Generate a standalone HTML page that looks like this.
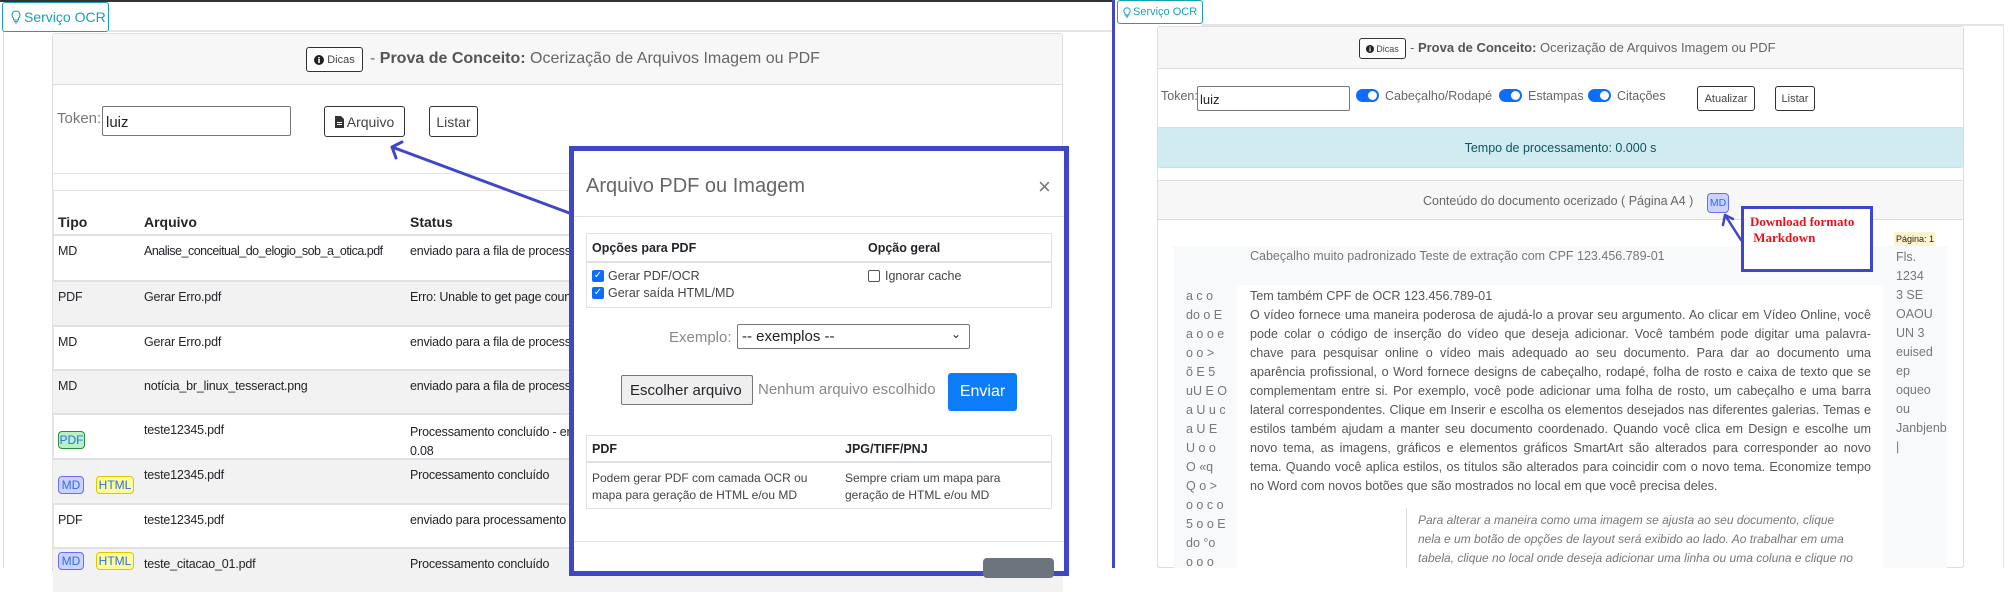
<!DOCTYPE html>
<html><head><meta charset="utf-8"><style>
*{box-sizing:border-box;margin:0;padding:0}
body{width:2010px;height:568px;overflow:hidden;background:#fff;font-family:"Liberation Sans",sans-serif;color:#212529;position:relative}
.a{position:absolute;white-space:nowrap}
.btn{position:absolute;border:1px solid #333;border-radius:3px;background:#fff;display:flex;align-items:center;justify-content:center;color:#444}
.row{position:absolute;left:53px;width:1010px;height:45px;border-top:2px solid #dee2e6;font-size:12.5px;letter-spacing:-0.2px}
.row span{position:absolute;top:8px}
.g{background:#f2f2f2}
.badge{position:absolute;border-radius:4px;font-size:12px;display:flex;align-items:center;justify-content:center;color:#2a6cf0;letter-spacing:0}
.pl{position:absolute;left:1250px;width:621px;font-size:12.6px;color:#555;text-align:justify;text-align-last:justify;white-space:nowrap;height:19px;line-height:19px}
.lc{position:absolute;left:1186px;font-size:12.5px;color:#777;line-height:19px}
.rc{position:absolute;left:1896px;font-size:12.5px;color:#777;line-height:19px}
</style></head><body>

<div class="a" style="left:0;top:0;width:1113px;height:2px;background:#333"></div>
<div class="a" style="left:3px;top:30px;width:1px;height:538px;background:#ddd"></div>
<div class="a" style="left:109px;top:30px;width:1004px;height:2px;background:#e4e4e4"></div>
<div class="a" style="left:2px;top:2px;width:107px;height:30px;border:1px solid #17a2b8;border-radius:3px;color:#17a2b8;font-size:14px;display:flex;align-items:center;padding-left:8px">
<svg width="10" height="14" viewBox="0 0 10 14" style="margin-right:3px"><path d="M5 1a4 4 0 0 0-2.5 7.1V10h5V8.1A4 4 0 0 0 5 1zM3 11.5h4M3.8 13h2.4" fill="none" stroke="#17a2b8" stroke-width="1"/></svg>Serviço OCR</div>

<div class="a" style="left:52px;top:33px;width:1011px;height:540px;border:1px solid #ddd;border-radius:3px"></div>
<div class="a" style="left:53px;top:34px;width:1009px;height:51px;background:#f7f7f7;border-bottom:1px solid #ddd"></div>
<div class="btn" style="left:306px;top:47px;width:57px;height:25px;font-size:11px"><svg width="10" height="10" style="margin-right:3px"><circle cx="5" cy="5" r="5" fill="#222"/><rect x="4.2" y="4" width="1.6" height="4" fill="#fff"/><rect x="4.2" y="2" width="1.6" height="1.4" fill="#fff"/></svg>Dicas</div>
<div class="a" style="left:370px;top:50px;font-size:16px;color:#666">- <b style="color:#555">Prova de Conceito:</b> Ocerização de Arquivos Imagem ou PDF</div>

<div class="a" style="left:57px;top:110px;font-size:15px;color:#777">Token:</div>
<div class="a" style="left:102px;top:106px;width:189px;height:30px;border:1px solid #777;border-radius:2px;font-size:15px;padding:7px 3px">luiz</div>
<div class="btn" style="left:324px;top:106px;width:81px;height:31px;font-size:14px"><svg width="9" height="12" style="margin-right:3px"><path d="M0 0h6l3 3v9H0z" fill="#333"/><rect x="2" y="6" width="5" height="1" fill="#fff"/><rect x="2" y="8" width="5" height="1" fill="#fff"/></svg>Arquivo</div>
<div class="btn" style="left:429px;top:106px;width:49px;height:31px;font-size:14px">Listar</div>
<div class="a" style="left:53px;top:173px;width:1009px;height:1px;background:#e4e4e4"></div>
<div class="a" style="left:52px;top:190px;width:1011px;height:1px;background:#e4e4e4"></div>
<div class="a" style="left:52px;top:190px;width:2px;height:378px;background:#e4e4e4"></div>

<div class="a" style="left:58px;top:214px;font-size:14px;font-weight:bold">Tipo</div>
<div class="a" style="left:144px;top:214px;font-size:14px;font-weight:bold">Arquivo</div>
<div class="a" style="left:410px;top:214px;font-size:14px;font-weight:bold">Status</div>

<div class="row" style="top:234px"><span style="left:5px">MD</span><span style="left:91px;letter-spacing:-0.5px">Analise_conceitual_do_elogio_sob_a_otica.pdf</span><span style="left:357px">enviado para a fila de processamento</span></div>
<div class="row g" style="top:280px"><span style="left:5px">PDF</span><span style="left:91px">Gerar Erro.pdf</span><span style="left:357px">Erro: Unable to get page count</span></div>
<div class="row" style="top:325px"><span style="left:5px">MD</span><span style="left:91px">Gerar Erro.pdf</span><span style="left:357px">enviado para a fila de processamento</span></div>
<div class="row g" style="top:369px"><span style="left:5px">MD</span><span style="left:91px">notícia_br_linux_tesseract.png</span><span style="left:357px">enviado para a fila de processamento</span></div>
<div class="row" style="top:413px"><span style="left:91px">teste12345.pdf</span><span style="left:357px;line-height:19px">Processamento concluído - em<br>0.08</span></div>
<div class="row g" style="top:458px"><span style="left:91px">teste12345.pdf</span><span style="left:357px">Processamento concluído</span></div>
<div class="row" style="top:503px"><span style="left:5px">PDF</span><span style="left:91px">teste12345.pdf</span><span style="left:357px">enviado para processamento</span></div>
<div class="row g" style="top:547px"><span style="left:91px">teste_citacao_01.pdf</span><span style="left:357px">Processamento concluído</span></div>

<div class="badge" style="left:58px;top:431px;width:27px;height:18px;background:#b9f0c6;border:1px solid #2a8a3a">PDF</div>
<div class="badge" style="left:58px;top:476px;width:26px;height:18px;background:#ccd2ff;border:1px solid #6b6bff">MD</div>
<div class="badge" style="left:96px;top:476px;width:38px;height:18px;background:#ffff9a;border:1px solid #e3c400">HTML</div>
<div class="badge" style="left:58px;top:552px;width:26px;height:18px;background:#ccd2ff;border:1px solid #6b6bff">MD</div>
<div class="badge" style="left:96px;top:552px;width:38px;height:18px;background:#ffff9a;border:1px solid #e3c400">HTML</div>

<svg class="a" style="left:0;top:0" width="1113" height="568"><path d="M572 214 L392 147 M392 147 L402 142 M392 147 L396 158" stroke="#3f46c8" stroke-width="3" fill="none" stroke-linecap="round"/></svg>

<div class="a" style="left:569px;top:146px;width:500px;height:430px;border:5px solid #3f46c8;background:#fff"></div>
<div class="a" style="left:586px;top:175px;font-size:20px;color:#666">Arquivo PDF ou Imagem</div>
<div class="a" style="left:1038px;top:174px;font-size:22px;color:#777">×</div>
<div class="a" style="left:574px;top:216px;width:490px;height:1px;background:#e2e2e2"></div>
<div class="a" style="left:586px;top:233px;width:466px;height:75px;border:1px solid #dee2e6"></div>
<div class="a" style="left:587px;top:261px;width:464px;height:2px;background:#dee2e6"></div>
<div class="a" style="left:592px;top:241px;font-size:12.5px;font-weight:bold">Opções para PDF</div>
<div class="a" style="left:868px;top:241px;font-size:12.5px;font-weight:bold">Opção geral</div>
<div class="a" style="left:592px;top:270px;width:12px;height:12px;background:#0d6efd;border-radius:2px;color:#fff;font-size:10px;line-height:12px;text-align:center">✓</div>
<div class="a" style="left:592px;top:287px;width:12px;height:12px;background:#0d6efd;border-radius:2px;color:#fff;font-size:10px;line-height:12px;text-align:center">✓</div>
<div class="a" style="left:608px;top:269px;font-size:12.5px;color:#444">Gerar PDF/OCR</div>
<div class="a" style="left:608px;top:286px;font-size:12.5px;color:#444">Gerar saída HTML/MD</div>
<div class="a" style="left:868px;top:270px;width:12px;height:12px;border:1px solid #555;border-radius:2px"></div>
<div class="a" style="left:885px;top:269px;font-size:12.5px;color:#444">Ignorar cache</div>
<div class="a" style="left:669px;top:329px;font-size:15px;color:#888">Exemplo:</div>
<div class="a" style="left:737px;top:324px;width:233px;height:25px;border:1px solid #777;border-radius:2px;font-size:15px;padding:3px 4px;color:#222">-- exemplos --<span style="position:absolute;right:8px;top:2px;font-size:12px">⌄</span></div>
<div class="a" style="left:621px;top:375px;width:132px;height:30px;border:1px solid #777;border-radius:2px;background:#efefef;font-size:15px;padding:6px 8px">Escolher arquivo</div>
<div class="a" style="left:758px;top:381px;font-size:15px;color:#888">Nenhum arquivo escolhido</div>
<div class="a" style="left:948px;top:373px;width:69px;height:38px;background:#0d7cf8;border-radius:3px;color:#fff;font-size:16px;display:flex;align-items:center;justify-content:center">Enviar</div>
<div class="a" style="left:586px;top:435px;width:466px;height:74px;border:1px solid #dee2e6"></div>
<div class="a" style="left:587px;top:461px;width:464px;height:2px;background:#dee2e6"></div>
<div class="a" style="left:592px;top:442px;font-size:12.5px;font-weight:bold">PDF</div>
<div class="a" style="left:845px;top:442px;font-size:12.5px;font-weight:bold">JPG/TIFF/PNJ</div>
<div class="a" style="left:592px;top:470px;font-size:12px;color:#444;line-height:17px">Podem gerar PDF com camada OCR ou<br>mapa para geração de HTML e/ou MD</div>
<div class="a" style="left:845px;top:470px;font-size:12px;color:#444;line-height:17px">Sempre criam um mapa para<br>geração de HTML e/ou MD</div>
<div class="a" style="left:574px;top:541px;width:490px;height:1px;background:#e2e2e2"></div>
<div class="a" style="left:983px;top:558px;width:71px;height:20px;background:#6c757d;border-radius:4px"></div>

<div class="a" style="left:1112px;top:0;width:3px;height:568px;background:#3f46c8"></div>

<div class="a" style="left:1202px;top:24px;width:801px;height:2px;background:#e4e4e4"></div>
<div class="a" style="left:2003px;top:24px;width:1px;height:544px;background:#e4e4e4"></div>
<div class="a" style="left:1117px;top:0;width:86px;height:24px;border:1px solid #17a2b8;border-radius:3px;color:#17a2b8;font-size:11px;display:flex;align-items:center;padding-left:5px">
<svg width="8" height="11" viewBox="0 0 10 14" style="margin-right:2px"><path d="M5 1a4 4 0 0 0-2.5 7.1V10h5V8.1A4 4 0 0 0 5 1zM3 11.5h4M3.8 13h2.4" fill="none" stroke="#17a2b8" stroke-width="1.2"/></svg>Serviço OCR</div>

<div class="a" style="left:1157px;top:26px;width:807px;height:542px;border:1px solid #ddd;border-radius:3px"></div>
<div class="a" style="left:1158px;top:27px;width:805px;height:42px;background:#f7f7f7;border-bottom:1px solid #ddd"></div>
<div class="btn" style="left:1359px;top:38px;width:47px;height:21px;font-size:9px"><svg width="8" height="8" style="margin-right:2px"><circle cx="4" cy="4" r="4" fill="#222"/><rect x="3.4" y="3.2" width="1.2" height="3.2" fill="#fff"/><rect x="3.4" y="1.5" width="1.2" height="1.1" fill="#fff"/></svg>Dicas</div>
<div class="a" style="left:1410px;top:40px;font-size:13px;color:#666">- <b style="color:#555">Prova de Conceito:</b> Ocerização de Arquivos Imagem ou PDF</div>

<div class="a" style="left:1161px;top:89px;font-size:12.5px;color:#666">Token:</div>
<div class="a" style="left:1197px;top:86px;width:153px;height:25px;border:1px solid #777;border-radius:2px;font-size:13px;padding:5px 2px">luiz</div>
<div class="a" style="left:1356px;top:89px;width:23px;height:13px;border-radius:7px;background:#0d6efd"><div style="position:absolute;right:2px;top:2px;width:9px;height:9px;border-radius:50%;background:#fff"></div></div>
<div class="a" style="left:1385px;top:89px;font-size:12.5px;color:#666">Cabeçalho/Rodapé</div>
<div class="a" style="left:1499px;top:89px;width:23px;height:13px;border-radius:7px;background:#0d6efd"><div style="position:absolute;right:2px;top:2px;width:9px;height:9px;border-radius:50%;background:#fff"></div></div>
<div class="a" style="left:1528px;top:89px;font-size:12.5px;color:#666">Estampas</div>
<div class="a" style="left:1588px;top:89px;width:23px;height:13px;border-radius:7px;background:#0d6efd"><div style="position:absolute;right:2px;top:2px;width:9px;height:9px;border-radius:50%;background:#fff"></div></div>
<div class="a" style="left:1617px;top:89px;font-size:12.5px;color:#666">Citações</div>
<div class="btn" style="left:1697px;top:86px;width:58px;height:25px;font-size:11px">Atualizar</div>
<div class="btn" style="left:1775px;top:86px;width:40px;height:25px;font-size:11px">Listar</div>

<div class="a" style="left:1157px;top:127px;width:807px;height:41px;background:#d1ecf1;border:1px solid #bee5eb;border-radius:3px;color:#0c5460;font-size:12.5px;text-align:center;line-height:40px">Tempo de processamento: 0.000 s</div>

<div class="a" style="left:1157px;top:180px;width:807px;height:388px;border:1px solid #ddd;border-radius:3px"></div>
<div class="a" style="left:1158px;top:181px;width:805px;height:39px;background:#f7f7f7;border-bottom:1px solid #ddd"></div>
<div class="a" style="left:1423px;top:194px;font-size:12.5px;color:#666">Conteúdo do documento ocerizado ( Página A4 )</div>
<div class="badge" style="left:1707px;top:193px;width:22px;height:20px;background:#ccd2ff;border:1px solid #6b6bff;font-size:10.5px">MD</div>

<div class="a" style="left:1174px;top:246px;width:773px;height:322px;background:#f8f9fa"></div>
<div class="a" style="left:1237px;top:285px;width:646px;height:283px;background:#fff"></div>
<div class="a" style="left:1250px;top:249px;font-size:12.5px;color:#777">Cabeçalho muito padronizado Teste de extração com CPF 123.456.789-01</div>
<div class="a" style="left:1894px;top:232px;width:41px;height:14px;background:#fff3cd;font-size:9px;line-height:14px;padding-left:2px;color:#222">Página: 1</div>

<div class="a" style="left:1250px;top:287px;font-size:12.6px;color:#555;line-height:19px">Tem também CPF de OCR 123.456.789-01</div>
<div class="pl" style="top:306px">O vídeo fornece uma maneira poderosa de ajudá-lo a provar seu argumento. Ao clicar em Vídeo Online, você</div>
<div class="pl" style="top:325px">pode colar o código de inserção do vídeo que deseja adicionar. Você também pode digitar uma palavra-</div>
<div class="pl" style="top:344px">chave para pesquisar online o vídeo mais adequado ao seu documento. Para dar ao documento uma</div>
<div class="pl" style="top:363px">aparência profissional, o Word fornece designs de cabeçalho, rodapé, folha de rosto e caixa de texto que se</div>
<div class="pl" style="top:382px">complementam entre si. Por exemplo, você pode adicionar uma folha de rosto, um cabeçalho e uma barra</div>
<div class="pl" style="top:401px">lateral correspondentes. Clique em Inserir e escolha os elementos desejados nas diferentes galerias. Temas e</div>
<div class="pl" style="top:420px">estilos também ajudam a manter seu documento coordenado. Quando você clica em Design e escolhe um</div>
<div class="pl" style="top:439px">novo tema, as imagens, gráficos e elementos gráficos SmartArt são alterados para corresponder ao novo</div>
<div class="pl" style="top:458px">tema. Quando você aplica estilos, os títulos são alterados para coincidir com o novo tema. Economize tempo</div>
<div class="pl" style="top:477px;text-align-last:left">no Word com novos botões que são mostrados no local em que você precisa deles.</div>

<div class="a" style="left:1406px;top:508px;width:1px;height:60px;background:#ddd"></div>
<div class="a" style="left:1418px;top:511px;font-size:12px;color:#777;font-style:italic;line-height:19px">Para alterar a maneira como uma imagem se ajusta ao seu documento, clique<br>nela e um botão de opções de layout será exibido ao lado. Ao trabalhar em uma<br>tabela, clique no local onde deseja adicionar uma linha ou uma coluna e clique no</div>

<div class="lc" style="top:287px">a c o<br>do o E<br>a o o e<br>o o &gt;<br>õ E 5<br>uU E O<br>a U u c<br>a U E<br>U o o<br>O «q<br>Q o &gt;<br>o o c o<br>5 o o E<br>do °o<br>o o o</div>
<div class="rc" style="top:248px">Fls.<br>1234<br>3 SE<br>OAOU<br>UN 3<br>euised<br>ep<br>oqueo<br>ou<br>Janbjenb<br>|</div>

<div class="a" style="left:1741px;top:206px;width:132px;height:66px;border:3px solid #3f46c8;background:#fff;color:#e8141c;font-family:'Liberation Serif',serif;font-weight:bold;font-size:13px;line-height:16px;padding:5px 0 0 6px">Download formato<br>&nbsp;Markdown</div>
<svg class="a" style="left:1700px;top:200px" width="60" height="50"><path d="M41 40 L25 15 M25 15 L23 25 M25 15 L33 19" stroke="#3f46c8" stroke-width="2.5" fill="none" stroke-linecap="round"/></svg>

</body></html>
